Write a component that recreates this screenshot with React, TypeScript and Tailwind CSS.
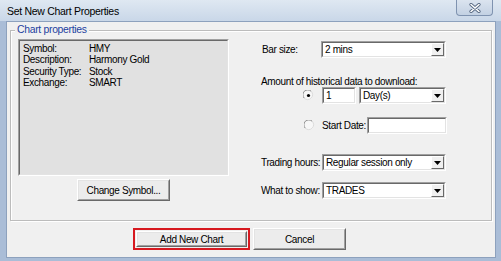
import type { ReactNode } from 'react';

const FONT = "font-['Liberation_Sans',Arial,sans-serif]";

function Sunken({ className = '', children }: { className?: string; children?: ReactNode }) {
  return (
    <div className={`border border-t-[#a0a0a0] border-l-[#a0a0a0] border-r-white border-b-white ${className}`}>
      <div className="h-full w-full border border-t-[#696969] border-l-[#696969] border-r-[#e3e3e3] border-b-[#e3e3e3] bg-white flex items-center">
        {children}
      </div>
    </div>
  );
}

function Select({ value, className = '' }: { value: string; className?: string }) {
  return (
    <Sunken className={`h-[17px] ${className}`}>
      <span className="flex-1 pl-[2px] leading-[13px] text-black whitespace-nowrap">{value}</span>
      <div className="w-[13px] h-[13px] bg-[#f0f0f0] border border-t-white border-l-white border-r-[#696969] border-b-[#696969] flex items-center justify-center">
        <svg width="7" height="4" viewBox="0 0 7 4">
          <path d="M0 0h7L3.5 4z" fill="#000" />
        </svg>
      </div>
    </Sunken>
  );
}

function Radio({ checked }: { checked?: boolean }) {
  return (
    <svg width="11" height="11" viewBox="0 0 11 11" className="shrink-0">
      <circle cx="5.5" cy="5.5" r="4.5" fill="#f7f7f7" />
      <path d="M1.3 8.2A4.6 4.6 0 0 1 8.2 1.3" stroke="#8a8a8a" strokeWidth="1" fill="none" />
      <path d="M8.2 1.3A4.6 4.6 0 0 1 1.3 8.2" stroke="#dcdcdc" strokeWidth="1" fill="none" />
      {checked && <circle cx="5.5" cy="5.5" r="1.6" fill="#000" />}
    </svg>
  );
}

function Button({ label, className = '' }: { label: string; className?: string }) {
  return (
    <div className={`border border-t-white border-l-white border-r-[#696969] border-b-[#696969] ${className}`}>
      <div className="h-full w-full border border-t-[#e3e3e3] border-l-[#e3e3e3] border-r-[#a0a0a0] border-b-[#a0a0a0] bg-[#ececec] flex items-center justify-center text-black whitespace-nowrap">
        {label}
      </div>
    </div>
  );
}

export default function App() {
  const info = [
    ['Symbol:', 'HMY'],
    ['Description:', 'Harmony Gold'],
    ['Security Type:', 'Stock'],
    ['Exchange:', 'SMART'],
  ];

  return (
    <div className={`w-[501px] h-[261px] bg-[#aabdd7] flex flex-col ${FONT}`}>
      {/* title bar */}
      <div className="h-[21px] flex items-start justify-between bg-gradient-to-b from-[#dfe8f2] to-[#c9d7e8]">
        <span className="pl-[7px] pt-[5px] text-[10.5px] tracking-[-0.3px] leading-[12px] text-black">Set New Chart Properties</span>
        <div className="mr-[8px] w-[37px] h-[16px] rounded-b-[4px] border border-t-0 border-[#7f93b0] bg-gradient-to-b from-[#dbe4ef] to-[#c3d1e3] flex items-center justify-center">
          <svg width="12" height="10" viewBox="0 0 12 10">
            <path d="M2 1.5l8 7M10 1.5l-8 7" stroke="#53657f" strokeWidth="3.2" strokeLinecap="round" />
            <path d="M2 1.5l8 7M10 1.5l-8 7" stroke="#fff" strokeWidth="1.6" strokeLinecap="round" />
          </svg>
        </div>
      </div>

      {/* client area */}
      <div className="ml-[6px] w-[490px] h-[237px] border border-[#8da1bd] bg-[#f0f0f0] text-[10px] tracking-[-0.35px] leading-[11px] whitespace-nowrap">
        {/* group box */}
        <div className="relative ml-[3px] mt-[8px] w-[482px] h-[191px] border border-[#bcbcbc] shadow-[inset_1px_1px_0_#fff,1px_1px_0_#fff] flex">
          <span className="absolute left-[4px] top-[-7px] px-[2px] bg-[#f0f0f0] text-[#1d3fa0] text-[10.4px] tracking-[-0.3px] leading-[12px]">Chart properties</span>

          {/* left column */}
          <div className="pl-[6px] pt-[8px] w-[219px] flex flex-col items-center">
            <div className="w-[211px] h-[137px] border border-t-[#a0a0a0] border-l-[#a0a0a0] border-r-white border-b-white">
              <div className="h-full w-full border border-t-[#696969] border-l-[#696969] border-r-[#e3e3e3] border-b-[#e3e3e3] bg-[#e1e1e1] pl-[3px] pt-[2px]">
                {info.map(([k, v]) => (
                  <div key={k} className="flex h-[11.3px] leading-[11.3px] text-black">
                    <span className="w-[66px]">{k}</span>
                    <span>{v}</span>
                  </div>
                ))}
              </div>
            </div>
            <Button label="Change Symbol..." className="mt-[3px] w-[93px] h-[22px]" />
          </div>

          {/* right column */}
          <div className="ml-[31px] flex flex-col text-black">
            <div className="mt-[10px] flex items-center h-[17px]">
              <span className="w-[60px] pl-[1px]">Bar size:</span>
              <Select value="2 mins" className="w-[125px]" />
            </div>
            <div className="mt-[18px] h-[11px]">Amount of historical data to download:</div>
            <div className="flex items-center h-[17px]">
              <div className="w-[61px] flex justify-end pr-[8px]">
                <Radio checked />
              </div>
              <Sunken className="w-[34px] h-[17px]">
                <span className="pl-[2px] leading-[13px]">1</span>
              </Sunken>
              <Select value="Day(s)" className="ml-[3px] w-[87px]" />
            </div>
            <div className="mt-[13px] flex items-center h-[17px]">
              <div className="w-[61px] flex justify-end pr-[7px]">
                <Radio />
              </div>
              <span className="w-[45px]">Start Date:</span>
              <Sunken className="w-[80px] h-[17px]" />
            </div>
            <div className="mt-[20px] flex items-center h-[17px]">
              <span className="w-[61px]">Trading hours:</span>
              <Select value="Regular session only" className="w-[124px]" />
            </div>
            <div className="mt-[11px] flex items-center h-[17px]">
              <span className="w-[61px]">What to show:</span>
              <Select value="TRADES" className="w-[124px]" />
            </div>
          </div>
        </div>

        {/* bottom buttons */}
        <div className="mt-[7px] ml-[126px] flex items-start">
          <div className="w-[117px] h-[22px] border-2 border-[#d71920] p-[1px]">
            <Button label="Add New Chart" className="w-full h-full" />
          </div>
          <Button label="Cancel" className="ml-[3px] w-[93px] h-[22px]" />
        </div>
      </div>
    </div>
  );
}
